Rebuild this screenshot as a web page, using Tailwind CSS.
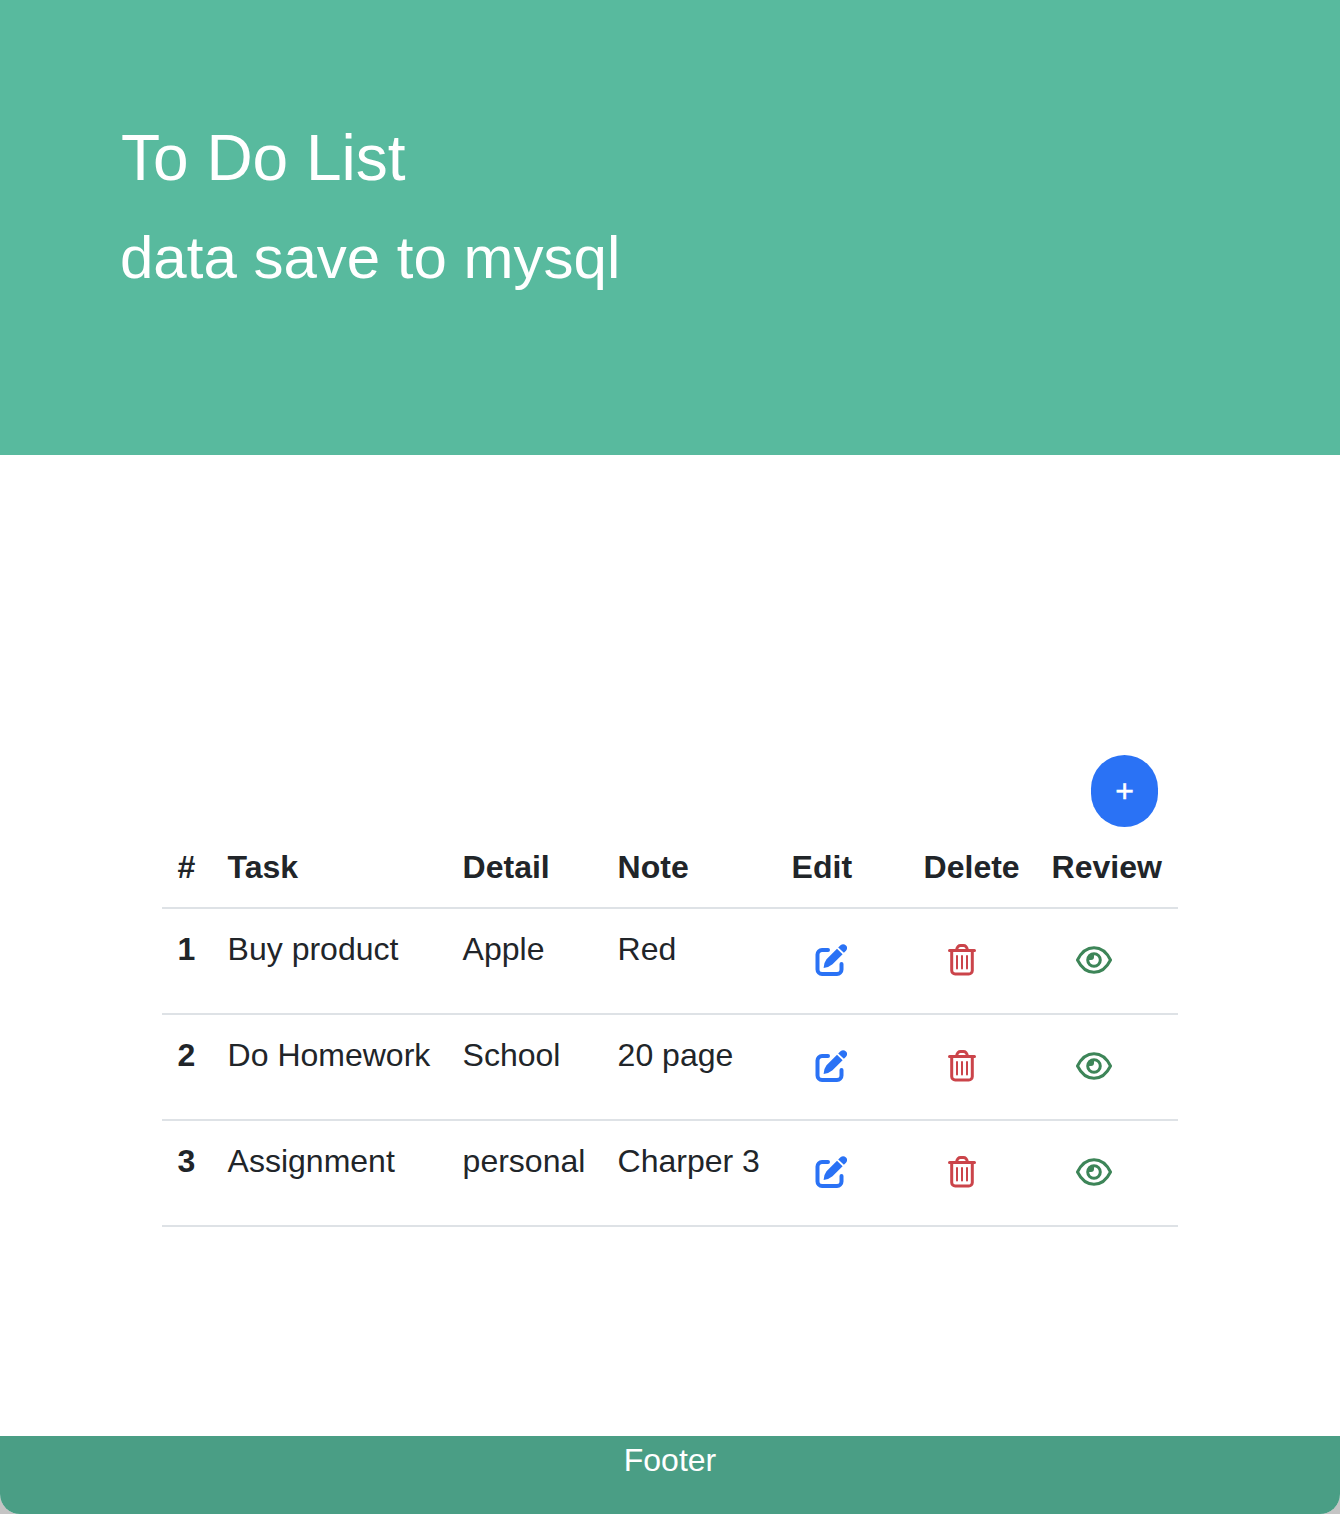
<!DOCTYPE html>
<html lang="en">
<head>
<meta charset="utf-8">
<title>To Do List</title>
<script src="https://cdn.jsdelivr.net/npm/@tailwindcss/browser@4"></script>
</head>
<body class="bg-[#c4c4c4] font-['Liberation_Sans',Arial,sans-serif] text-[32px] leading-[48px] text-[#212529]">
<svg class="hidden">
  <symbol id="edit" viewBox="0 0 32 32">
    <path d="M13 6H7A4.500 4.500 0 0 0 2.500 10.500V25.500A4.500 4.500 0 0 0 7 30H22A4.500 4.500 0 0 0 26.500 25.500V20" fill="none" stroke="#2a72f5" stroke-width="4" stroke-linecap="round"/>
    <path d="M22 4.700 27.600 10.200 17.500 20.300Q14 23.400 8.600 24Q8.800 18.500 11.500 15.200ZM23.200 3.400 25.500 1.200Q28.200-1 31 1.400Q33.400 4 31 6.700L28.900 8.800Z" fill="#2a72f5"/>
  </symbol>
  <symbol id="trash" viewBox="0 0 28 34">
    <g fill="none" stroke="#cb444a" stroke-linecap="round" stroke-linejoin="round">
      <path d="M1.500 7.500H26.500M3.700 8V27.500A3.500 3.500 0 0 0 7.200 31H20.800A3.500 3.500 0 0 0 24.300 27.500V8M8.500 7Q9.500 2.500 12.500 2.500H15.500Q18.500 2.500 19.500 7" stroke-width="3"/>
      <path d="M9 13V25.500M14 13V25.500M19 13V25.500" stroke-width="2"/>
    </g>
  </symbol>
  <symbol id="eye" viewBox="0 0 36 28">
    <path d="M1.500 14C9.500-2.300 26.500-2.300 34.500 14C26.500 30.300 9.500 30.300 1.500 14Z" fill="none" stroke="#3d8558" stroke-width="3" stroke-linejoin="round"/>
    <circle cx="18" cy="14" r="6.300" fill="none" stroke="#3d8558" stroke-width="3"/>
    <path d="M12 14V9L18 7.500V11Q18 14 15 14Z" fill="#3d8558"/>
  </symbol>
</svg>
<div class="flex h-[1514px] flex-col overflow-hidden rounded-b-[20px] bg-white">
  <header class="h-[455px] bg-[#58ba9e] px-[120px] pt-[120px] text-white">
    <h1 class="pl-px text-[64px] leading-[77px]">To Do List</h1>
    <p class="mt-4 text-[60px] leading-[90px]">data save to mysql</p>
  </header>
  <main class="flex grow flex-col px-[162px] pt-[300px]">
    <button class="mr-5 h-[72px] w-[67px] self-end rounded-[34px] bg-[#2a72f5] text-white [-webkit-text-stroke:0.5px_white]">+</button>
    <table class="w-[1016px] table-fixed border-collapse text-left">
      <colgroup><col class="w-[50px]"><col class="w-[235px]"><col class="w-[155px]"><col class="w-[174px]"><col class="w-[132px]"><col class="w-[128px]"><col class="w-[142px]"></colgroup>
      <thead>
        <tr class="h-[81px] border-b-2 border-[#dee2e6] align-top whitespace-nowrap *:pt-4 *:pl-[15.600px]"><th>#</th><th>Task</th><th>Detail</th><th>Note</th><th>Edit</th><th>Delete</th><th>Review</th></tr>
      </thead>
      <tbody id="tasks"></tbody>
    </table>
  </main>
  <footer class="h-[78px] bg-[#4a9e85] text-center text-white">Footer</footer>
</div>
<script>
  const tasks = [["Buy product", "Apple", "Red"], ["Do Homework", "School", "20 page"], ["Assignment", "personal", "Charper 3"]];
  document.getElementById("tasks").innerHTML = tasks.map((t, i) => `
    <tr class="h-[106px] border-b-2 border-[#dee2e6] align-top whitespace-nowrap">
      <th class="pt-4 pl-[15.600px]">${i + 1}</th>
      ${t.map(v => `<td class="pt-4 pl-[15.600px]">${v}</td>`).join("")}
      <td class="pt-[35px] pl-[39px]"><svg class="h-8 w-8 overflow-visible"><use href="#edit"/></svg></td>
      <td class="pt-[34px] pl-[39.500px]"><svg class="h-[34px] w-7"><use href="#trash"/></svg></td>
      <td class="pt-[37px] pl-[40px]"><svg class="h-7 w-9"><use href="#eye"/></svg></td>
    </tr>`).join("");
</script>
</body>
</html>
